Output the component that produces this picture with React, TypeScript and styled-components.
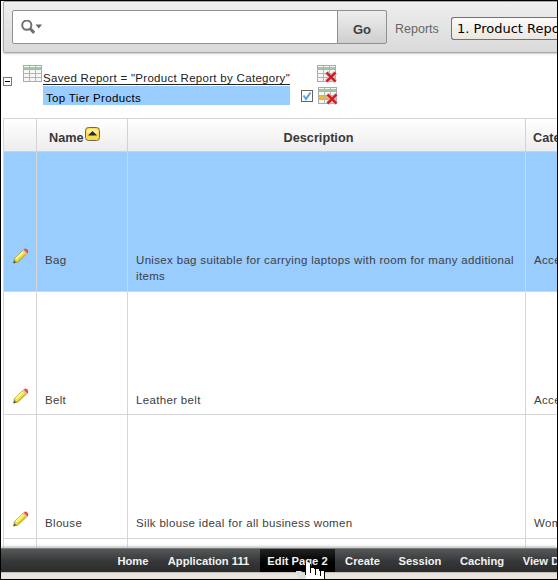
import React from "react";
import styled, { createGlobalStyle } from "styled-components";

const Global = createGlobalStyle`
  * { box-sizing: border-box; }
  body { margin: 0; background: #fff; font-family: "Liberation Sans", Arial, sans-serif; }
`;
const Page = styled.div`
  width: 558px; height: 580px; overflow: hidden; position: relative;
  display: flex; flex-direction: column;
  border: 1px solid #000; background: #fff;
  font-size: 11.5px; color: #404040; white-space: nowrap;
`;
const SearchBar = styled.div`
  height: 52px; flex: none; margin-left: 2px; padding: 9px 0 0 8px;
  display: flex; align-items: flex-start;
  border: solid #a8a8a8; border-width: 1px 0 1px 1px; border-radius: 2px 0 0 2px;
  background: linear-gradient(#eeeeee, #dadada);
  box-shadow: 0 1px 2px #ccc;
`;
const SearchField = styled.div`
  width: 326px; height: 34px; padding: 9px 0 0 8px; margin-top: -1px;
  border: 1px solid #929292; border-radius: 2px 0 0 2px; background: #fff;
`;
const GoButton = styled.button`
  width: 50px; height: 34px; margin: -1px 0 0 -1px; padding: 4px 0 0;
  border: 1px solid #8f8f8f; border-radius: 0 2px 2px 0;
  background: linear-gradient(#eee, #cfcfcf); color: #404040;
  font: bold 13px "Liberation Sans", Arial, sans-serif;
`;
const Label = styled.label`
  margin: 10px 0 0 8px; width: 56px; font-size: 12.5px; line-height: 17px; color: #666;
`;
const Select = styled.div`
  flex: 1; min-width: 0; height: 23px; margin-top: 6px; padding: 0 0 0 5px; overflow: hidden;
  border: 1px solid #77736a; border-right: 0; border-radius: 3px 0 0 3px;
  background: linear-gradient(#fcfbf9, #ebe6e0); color: #000;
  font: 13px/22px "DejaVu Sans", sans-serif;
`;
const Filters = styled.div`
  height: 65px; flex: none; display: flex; align-items: flex-start;
`;
const Collapse = styled.svg`margin: 24px 0 0 2px; flex: none;`;
const SheetIcon = styled.svg<{ $left?: number; $top?: number }>`
  flex: none; margin: ${p => p.$top ?? 0}px 0 0 ${p => p.$left ?? 0}px;
`;
const FilterNames = styled.div`width: 248px; flex: none; padding-top: 17px;`;
const Saved = styled.div`
  width: 247px; height: 15px; line-height: 17px; border-bottom: 1px solid #222; color: #222; letter-spacing: 0.3px;
`;
const Highlight = styled.div`
  width: 247px; height: 19px; margin-top: 1px; padding-left: 3px; line-height: 24px;
  background: #99ccff; color: #000; letter-spacing: 0.33px;
`;
const Actions = styled.div`
  margin: 12px 0 0 10px; display: grid; grid-template-columns: 16px 21px; row-gap: 4px;
`;
const Checkbox = styled.svg`margin-top: 3px;`;
const Table = styled.div`
  flex: 1; min-height: 0; margin-left: 2px; overflow: hidden;
  border: 1px solid #d6d6d6; border-right: 0; border-bottom: 0;
`;
const Row = styled.div<{ $height: number; $active?: boolean }>`
  height: ${p => p.$height}px; display: grid; grid-template-columns: 33px 91px 398px 1fr;
  border-bottom: 1px solid #d6d6d6; background: ${p => (p.$active ? "#99ccff" : "#fff")};
`;
const HeaderRow = styled(Row)`
  background: linear-gradient(#fff, #ededed); border-bottom-color: #c6d4e2;
  font-weight: bold; font-size: 12.7px; line-height: 16px; color: #383838;
`;
const Cell = styled.div<{ $top: number }>`
  padding: ${p => p.$top}px 0 0 8px; line-height: 16px; overflow: hidden;
  border-right: 1px solid #d6d6d6; letter-spacing: 0.33px;
  &:last-child { border-right: 0; }
`;
const Head = styled.div<{ $pad?: number; $center?: boolean }>`
  padding: 11px ${p => (p.$center ? 16 : 0)}px 0 ${p => p.$pad ?? 0}px;
  text-align: ${p => (p.$center ? "center" : "left")};
  border-right: 1px solid #d2d2d2; overflow: hidden;
  &:last-child { border-right: 0; }
`;
const NameHead = styled(Head)`display: flex; align-items: flex-start;`;
const SortBadge = styled.svg`margin: -3px 0 0 1px; flex: none;`;
const DevBar = styled.nav`
  height: 24px; flex: none; display: flex; position: relative;
  padding-left: 108px; background: linear-gradient(#555759, #363738 55%, #2b2b2b);
  border-top: 1px solid #78807d; box-shadow: 0 -1px 3px #aaa;
`;
const DevLink = styled.a<{ $w: number; $active?: boolean }>`
  width: ${p => p.$w}px; flex: none; text-align: center; line-height: 24px;
  color: #f2f2f2; font-weight: bold; font-size: 11.2px;
  background: ${p => (p.$active ? "linear-gradient(#222,#000 60%)" : "none")};
`;
const Footer = styled.div`height: 7px; flex: none; background: #eae5df; border-top: 1px solid #c9c4bd;`;
const Pointer = styled.svg`position: absolute; left: 295px; top: 561px;`;

const Cross = () => (
  <g>
    <path d="M9.5 7.5 L18.5 16.5 M18.5 7.5 L9.5 16.5" stroke="#c3b4b4" strokeWidth="4" />
    <path d="M9.5 7.5 L18.5 16.5 M18.5 7.5 L9.5 16.5" stroke="#dc141c" strokeWidth="2.3" />
  </g>
);
const Sheet = ({ left, top, cross, gold }: { left?: number; top?: number; cross?: boolean; gold?: boolean }) => (
  <SheetIcon $left={left} $top={top} width="20" height="18" viewBox="0 0 20 18">
    <rect x="0.5" y="0.5" width="18" height="16" fill="#f7f7f7" stroke="#a9aca9" />
    <rect x="1" y="2" width="17" height="2" fill="#9fcba2" />
    {gold && <path d="M1 10.5h17" stroke="#f0b92f" strokeWidth="3" />}
    <path d="M0 4.5h19M0 8.5h19M0 12.5h19M6.5 1v16M12.5 1v16" stroke="#b2b4b2" fill="none" />
    {cross && <Cross />}
  </SheetIcon>
);
const Pencil = () => (
  <svg width="17" height="16" viewBox="0 0 17 16">
    <path d="M1.2 10.8 10.3 2 14 5.6 4.9 14.2 1.2 14.8Z" fill="#f0e23c" stroke="#a59438" strokeWidth=".7" />
    <path d="M3 10.6 10.9 3.3" stroke="#fff9a0" strokeWidth="1.5" />
    <path d="M4.8 13.2 13 5.5" stroke="#c9b02b" strokeWidth="1" />
    <path d="M10.8 1.8Q12.3-.2 14 1.2T15 5L14 5.7Z" fill="#ee4a36" />
    <path d="m10.1 2.3 3.6 3.6" stroke="#cfc5bb" strokeWidth="1.5" />
    <path d="m1 11.4 3.4 2.8-3.6 1Z" fill="#a88d52" />
    <path d="m.7 13 1.8 1.6-2 .8Z" fill="#333" />
  </svg>
);
const PencilCell = styled(Cell)`padding: ${p => p.$top - 4}px 0 0 9px;`;

const rows = [
  { h: 140, top: 100, name: "Bag", text: ["Unisex bag suitable for carrying laptops with room for many additional", "items"], cat: "Acce" },
  { h: 123, top: 100, name: "Belt", text: ["Leather belt"], cat: "Acce" },
  { h: 124, top: 100, name: "Blouse", text: ["Silk blouse ideal for all business women"], cat: "Wom" },
];

export default function App() {
  return (
    <Page>
      <Global />
      <SearchBar>
        <SearchField>
          <svg width="24" height="18" viewBox="0 0 24 18" fill="none">
            <circle cx="5.8" cy="5.2" r="4.6" stroke="#707070" strokeWidth="2" />
            <path d="m9 8.5 4.2 4.4" stroke="#707070" strokeWidth="3" />
            <path d="M14.5 4.5h6.5l-3.2 4Z" fill="#666" />
          </svg>
        </SearchField>
        <GoButton>Go</GoButton>
        <Label>Reports</Label>
        <Select>1. Product Repo</Select>
      </SearchBar>
      <Filters>
        <Collapse width="9" height="9">
          <rect x=".5" y=".5" width="8" height="8" fill="#fff" stroke="#4b8b8b" />
          <path d="M2 4.5h5" stroke="#000" />
        </Collapse>
        <Sheet left={11} top={12} />
        <FilterNames>
          <Saved>Saved Report = "Product Report by Category"</Saved>
          <Highlight>Top Tier Products</Highlight>
        </FilterNames>
        <Actions>
          <span />
          <Sheet cross />
          <Checkbox width="12" height="12" viewBox="0 0 12 12">
            <rect x=".5" y=".5" width="11" height="11" fill="#fff" stroke="#6b6259" />
            <path d="m2.5 5.5 2.5 3.5L9.5 2.5" fill="none" stroke="#559fe3" strokeWidth="2" />
          </Checkbox>
          <Sheet cross gold left={1} />
        </Actions>
      </Filters>
      <Table>
        <HeaderRow $height={33}>
          <Head />
          <NameHead $pad={12}>
            Name
            <SortBadge width="15" height="15" viewBox="0 0 15 15">
              <rect x=".5" y=".5" width="14" height="13" rx="3" fill="#fbd94f" stroke="#6d6850" />
              <path d="M2 3Q7 .5 13 3V6H2Z" fill="#ffefa0" />
              <path d="M3 8.5 7.5 4 12 8.5Z" fill="#292929" />
            </SortBadge>
          </NameHead>
          <Head $center>Description</Head>
          <Head $pad={7}>Cate</Head>
        </HeaderRow>
        {rows.map((r, i) => (
          <Row key={r.name} $height={r.h} $active={i === 0}>
            <PencilCell $top={r.top}><Pencil /></PencilCell>
            <Cell $top={r.top}>{r.name}</Cell>
            <Cell $top={r.top}>{r.text.map(t => <div key={t}>{t}</div>)}</Cell>
            <Cell $top={r.top}>{r.cat}</Cell>
          </Row>
        ))}
        <Row $height={40}><Cell $top={0} /><Cell $top={0} /><Cell $top={0} /><Cell $top={0} /></Row>
      </Table>
      <DevBar>
        <DevLink $w={48}>Home</DevLink>
        <DevLink $w={103}>Application 111</DevLink>
        <DevLink $w={75} $active>Edit Page 2</DevLink>
        <DevLink $w={55}>Create</DevLink>
        <DevLink $w={60}>Session</DevLink>
        <DevLink $w={64}>Caching</DevLink>
        <DevLink $w={54}>View D</DevLink>
      </DevBar>
      <Footer />
      <Pointer width="32" height="17" viewBox="0 0 32 17">
        <path d="M10 17V2.5Q10 0 12 0T14 2.5V6H18V7H23V9H28V17Z" fill="#fff" />
        <path d="M0 9H5L9 12V17H4L0 12Z" fill="#dedede" />
        <path d="M9.5 1v12M14.5 2v9M19.5 7v6M24.5 9v5M28.5 9v8" stroke="#000" />
      </Pointer>
    </Page>
  );
}
